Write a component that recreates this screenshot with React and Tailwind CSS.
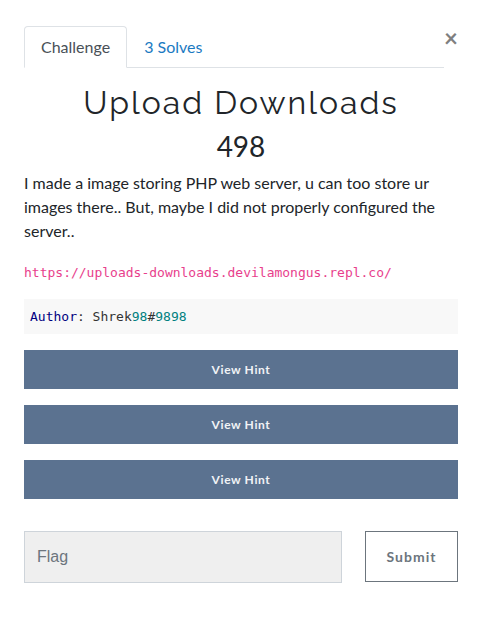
export default function App() {
  const hints = [1, 2, 3];
  return (
    <main className="bg-white px-6 pt-[26px] pb-11 font-['Lato',sans-serif] text-base leading-6 text-[#212529]">
      <header className="flex items-start">
        <nav className="flex flex-1 border-b border-[#dee2e6]">
          <a href="#challenge" className="-mb-px rounded-t border border-[#dee2e6] border-b-white bg-white px-4 py-2 text-[#495057]">Challenge</a>
          <a href="#solves" className="-mb-px border border-transparent px-4 py-2 text-[#1b7ac2]">3 Solves</a>
        </nav>
        <button type="button" aria-label="Close" className="w-[14px] text-2xl leading-6 font-bold text-[#7f7f7f]">×</button>
      </header>
      <h2 className="mt-4 text-center font-['Raleway','Lato',sans-serif] text-[32px] leading-[38px] font-normal tracking-[2px]">Upload Downloads</h2>
      <h3 className="mt-2 text-center text-[28px] leading-[33px]">498</h3>
      <p className="mt-2">I made a image storing PHP web server, u can too store ur images there.. But, maybe I did not properly configured the server..</p>
      <p className="mt-5 font-['DejaVu_Sans_Mono',monospace] text-[13px] leading-5 text-[#e83e8c]">https://uploads-downloads.devilamongus.repl.co/</p>
      <pre className="mt-4 bg-[#f8f8f8] px-1.5 py-[7px] font-['DejaVu_Sans_Mono',monospace] text-[13px] leading-[21px] text-[#333]"><span className="text-[#000080]">Author</span>: Shrek<span className="text-[#008080]">98</span>#<span className="text-[#008080]">9898</span></pre>
      <div className="mt-4 flex flex-col gap-4">
        {hints.map((h) => (
          <button key={h} type="button" className="h-[39px] bg-[#5b7290] text-xs font-bold tracking-wider text-[#f1f3f6]">View Hint</button>
        ))}
      </div>
      <form className="mt-8 flex gap-[23px]">
        <input aria-label="Flag" placeholder="Flag" className="h-[52px] min-w-0 flex-1 border border-[#ced4da] bg-[#efefef] px-3 font-['Liberation_Sans',sans-serif] placeholder:text-[#6c757d]" />
        <button type="button" className="h-[51px] w-[93px] border border-[#6c757d] text-sm font-bold tracking-[1px] text-[#6c757d]">Submit</button>
      </form>
    </main>
  );
}
